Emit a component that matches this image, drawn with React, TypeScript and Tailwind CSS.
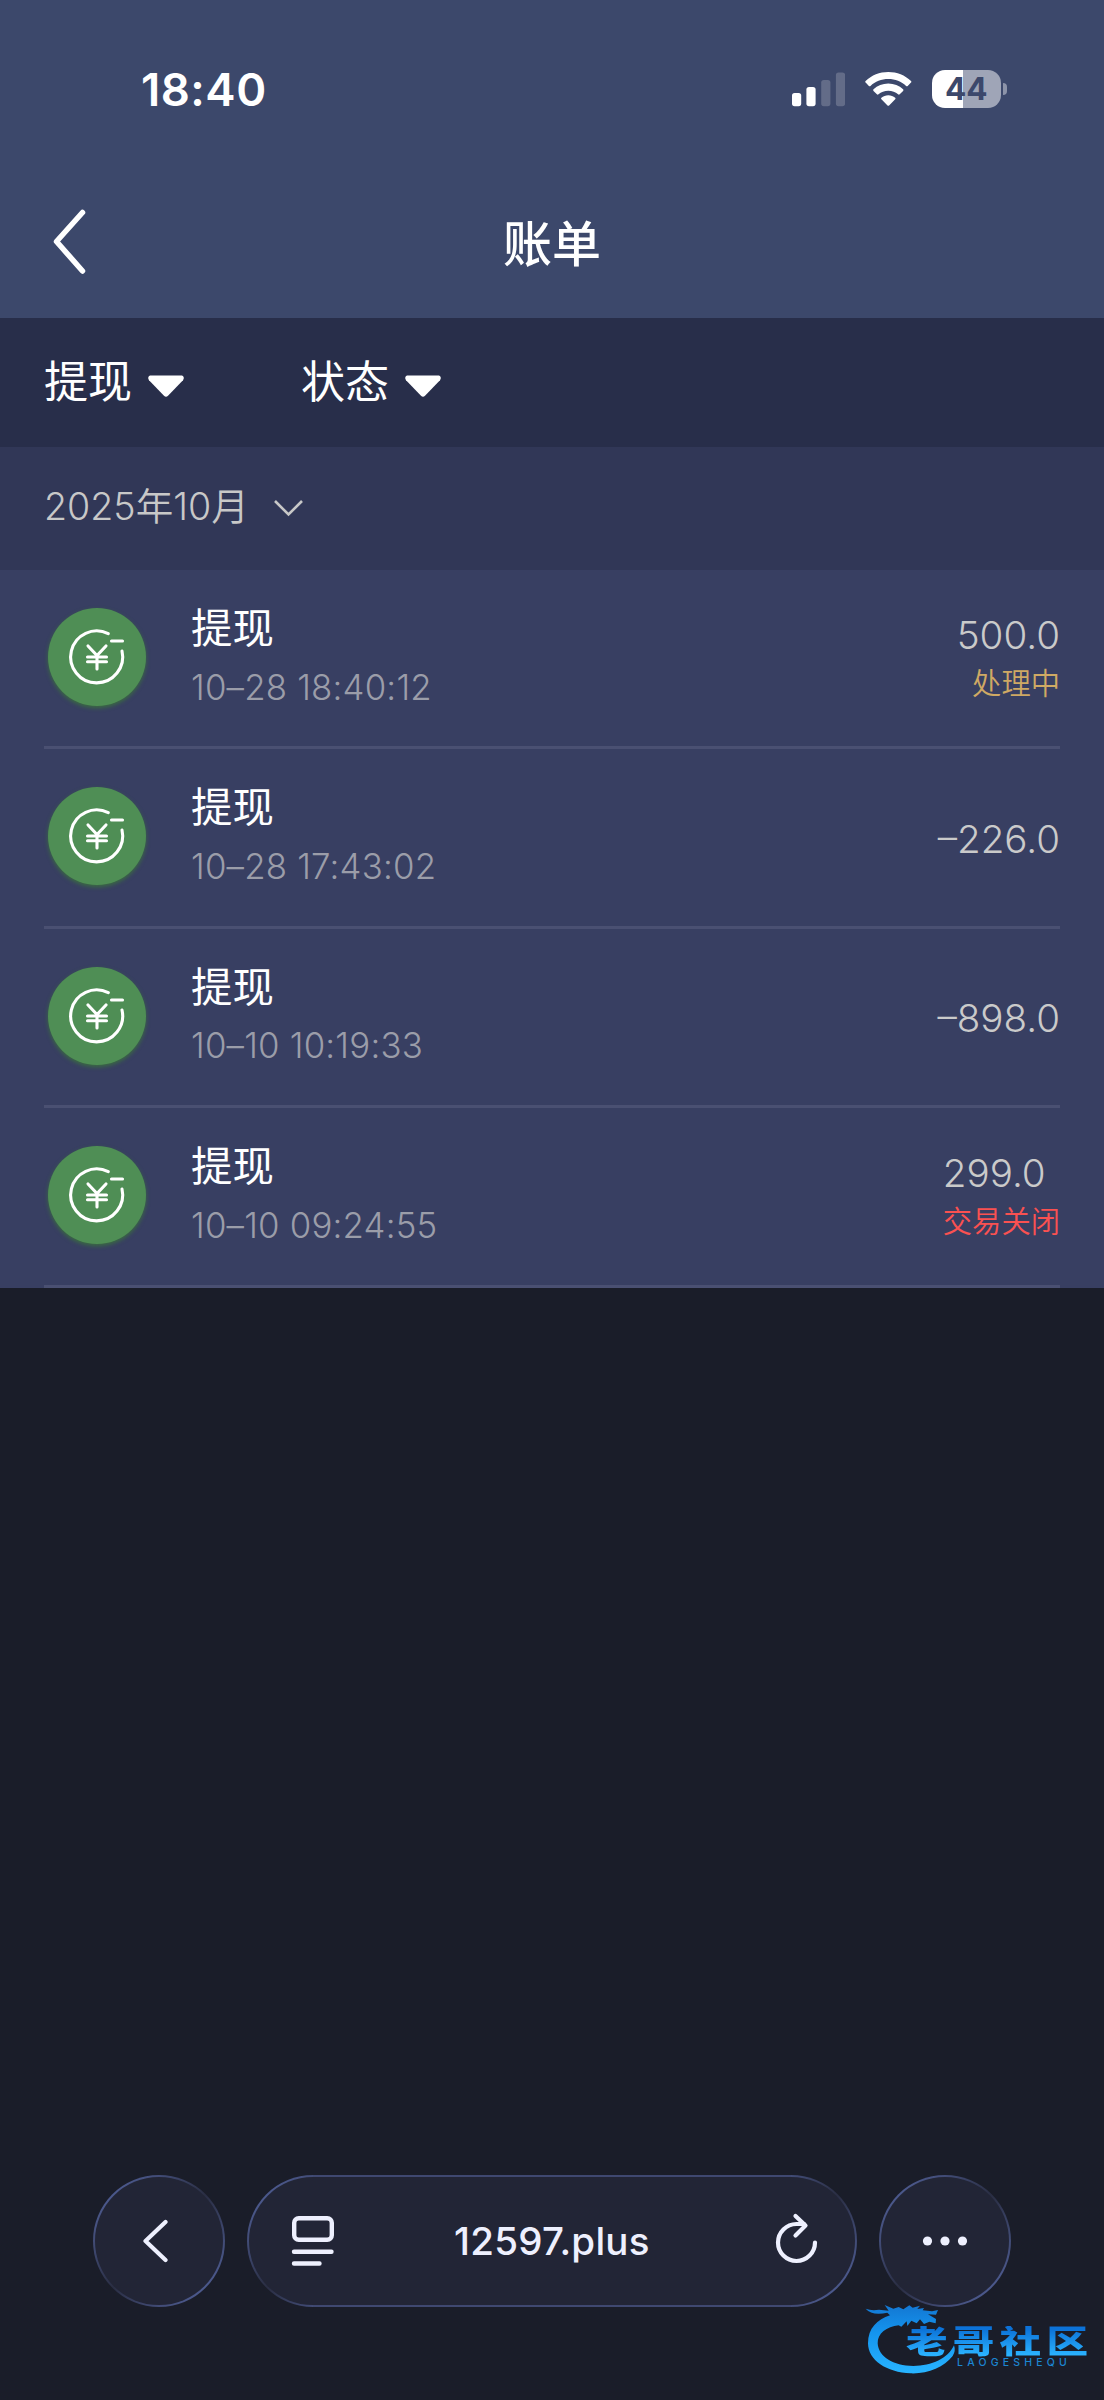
type Bill = {
  id: number
  title: string
  time: string
  amount: string
  status?: string
  closed?: boolean
}

const bills: Bill[] = [
  { id: 1, title: "提现", time: "10–28 18:40:12", amount: "500.0", status: "处理中" },
  { id: 2, title: "提现", time: "10–28 17:43:02", amount: "–226.0" },
  { id: 3, title: "提现", time: "10–10 10:19:33", amount: "–898.0" },
  { id: 4, title: "提现", time: "10–10 09:24:55", amount: "299.0", status: "交易关闭", closed: true },
]

function StatusBar() {
  return (
    <div className="flex h-[178px] items-start justify-between pl-[141px] pr-[97px] pt-[62px]">
      <span className="text-[45.5px] font-semibold leading-[55px] tracking-[0.5px]">18:40</span>
      <div className="flex pt-[8px]">
        <svg width="53" height="38" viewBox="0 0 53 38" fill="#fff">
          <rect x="0" y="23" width="9.2" height="13.2" rx="2.6" />
          <rect x="14.4" y="17" width="9.2" height="19.2" rx="2.6" />
          <rect x="29.2" y="10" width="9.2" height="26.2" rx="2.6" opacity=".2" />
          <rect x="43.9" y="2.4" width="9.2" height="33.8" rx="2.6" opacity=".2" />
        </svg>
        <svg className="ml-[20px]" width="47" height="38" viewBox="0 0 47 38" fill="#fff">
          <path d="M23.3 2.1C32 2.1 40 5.4 46 11q.8.8 0 1.6l-3.3 3.3q-.8.8-1.6 0C36.4 11.6 30.2 9 23.3 9S10.2 11.6 5.5 15.9q-.8.8-1.6 0L.6 12.6q-.8-.8 0-1.6C6.6 5.4 14.6 2.1 23.3 2.1z" />
          <path d="M23.3 13.6c5.7 0 10.9 2.1 14.8 5.7q.8.8 0 1.6l-3.4 3.4q-.8.8-1.6 0c-2.6-2.3-6-3.6-9.8-3.6s-7.2 1.3-9.8 3.6q-.8.8-1.6 0l-3.4-3.4q-.8-.8 0-1.6c3.9-3.6 9.1-5.7 14.8-5.7z" />
          <path d="M23.3 25.2c2.6 0 5 .9 6.9 2.5q.8.8 0 1.5l-6.1 6.3q-.8.7-1.6 0l-6.1-6.3q-.8-.7 0-1.5c1.9-1.6 4.3-2.5 6.9-2.5z" />
        </svg>
        <div className="ml-[20px] flex items-center">
          <div className="flex h-[38px] w-[68.5px] items-center justify-center rounded-[13px] bg-[linear-gradient(90deg,#fff_30.5px,#9fa5b7_30.5px)]">
            <span className="text-[31.5px] font-bold leading-[38px] text-[#3c486b]">44</span>
          </div>
          <div className="ml-[2.5px] h-[12px] w-[4px] rounded-r-[4px] bg-[#8d94a9]" />
        </div>
      </div>
    </div>
  )
}

function Filter({ label }: { label: string }) {
  return (
    <div className="flex w-[257px] items-center">
      <span className="text-[44px] leading-[64px]">{label}</span>
      <svg className="ml-[15px] mt-[8px]" width="38" height="24" viewBox="0 0 38 24">
        <path d="M3 1.5H35Q38 3 36 6.2L21 21.8Q19 23.5 17 21.8L2 6.2Q0 3 3 1.5Z" fill="#fff" />
      </svg>
    </div>
  )
}

function YuanIcon() {
  return (
    <div className="size-[98px] rounded-full bg-[#4f8e55] shadow-[0_2px_4px_rgba(60,130,50,0.7)]">
      <svg width="98" height="98" viewBox="0 0 98 98" fill="none" stroke="#fff" strokeWidth="3.1" strokeLinecap="round">
        <path d="M60.3 25.6A26 26 0 1 0 74 43" />
        <path d="M63.5 33H74.5" />
        <path d="M40 38L49 47.5L58 38M49 47.5V61M39.5 49H58.5M39.5 53.8H58.5" />
      </svg>
    </div>
  )
}

function BillRow({ bill }: { bill: Bill }) {
  return (
    <li className="mx-[44px] flex h-[179.4px] items-start border-b-[3px] border-[#4a5072]">
      <div className="ml-[4px] mt-[38px]">
        <YuanIcon />
      </div>
      <div className="ml-[45px] pt-[31px]">
        <div className="text-[41.4px] leading-[54px] text-white">{bill.title}</div>
        <div className="mt-[7.5px] text-[34.8px] font-[350] leading-[48px] tracking-[0.2px] text-[#9b9da9]">{bill.time}</div>
      </div>
      <div className="ml-auto flex h-full flex-col items-start justify-center pt-[2px]">
        <div className="text-[38.6px] font-[350] leading-[48px] text-[#cacaca]">{bill.amount}</div>
        {bill.status && (
          <div className={bill.closed ? "self-end pt-[1px] text-[29.3px] font-[350] leading-[48px] text-[#fa5151]" : "self-end pt-[1px] text-[29.3px] font-[350] leading-[48px] text-[#cfa964]"}>
            {bill.status}
          </div>
        )}
      </div>
    </li>
  )
}

function RoundButton({ children }: { children: React.ReactNode }) {
  return (
    <div className="size-[132px] rounded-full bg-[linear-gradient(135deg,#4b588b_15%,#2a2e43_50%,#4b588b_85%)] p-[2px]">
      <div className="flex size-full items-center justify-center rounded-full bg-[#222536]">{children}</div>
    </div>
  )
}

function BrowserBar() {
  return (
    <div className="mt-auto flex gap-[22px] pl-[93px] pb-[93px]">
      <RoundButton>
        <svg className="-ml-[8px]" width="26" height="44" viewBox="0 0 26 44" fill="none" stroke="#eef0fe" strokeWidth="4.2" strokeLinecap="round" strokeLinejoin="round">
          <path d="M23.5 3L3.5 22L23.5 41" />
        </svg>
      </RoundButton>

      {/* round caps get their own light, the straight part stays even */}
      <div className="h-[132px] w-[610px] rounded-[66px] bg-[linear-gradient(#3f4870,#3f4870),linear-gradient(135deg,#4b588b_15%,#2a2e43_50%,#4b588b_85%),linear-gradient(135deg,#4b588b_15%,#2a2e43_50%,#4b588b_85%)] bg-[length:478px_132px,132px_132px,132px_132px] bg-[position:66px_0,0_0,478px_0] bg-no-repeat p-[2px]">
        <div className="flex size-full items-center rounded-[64px] bg-[#222536]">
          <svg className="ml-[42px]" width="44" height="52" viewBox="0 0 44 52" fill="none" stroke="#eef0fe" strokeWidth="4.4" strokeLinecap="round">
            <rect x="3.2" y="3.2" width="37.6" height="21.6" rx="4.5" />
            <path d="M3 36.8H40.5M3 48.5H28.5" />
          </svg>
          <span className="ml-[119px] text-[38.5px] font-[450] leading-[48px] tracking-[0.25px] text-[#eef0fe]">12597.plus</span>
          <svg className="ml-auto mr-[37px] -mt-[4px]" width="44" height="52" viewBox="0 0 44 52" fill="none" stroke="#eef0fe" strokeWidth="4.2" strokeLinecap="round" strokeLinejoin="round">
            <path d="M41 29.5A18.5 18.5 0 1 1 22.5 11H30" />
            <path d="M21.5 3L31.5 12.5L21.5 22.5" />
          </svg>
        </div>
      </div>

      <RoundButton>
        <svg width="46" height="10" viewBox="0 0 46 10" fill="#eef0fe">
          <circle cx="5.5" cy="5" r="4.6" />
          <circle cx="23" cy="5" r="4.6" />
          <circle cx="40.5" cy="5" r="4.6" />
        </svg>
      </RoundButton>
    </div>
  )
}

function Watermark() {
  return (
    <div className="absolute left-[864px] top-[2300px] h-[80px] w-[228px]">
      <svg className="absolute left-0 top-0" width="100" height="80" viewBox="72 450 300 240">
        <defs>
          <linearGradient id="dragon" x1="0" y1="0" x2="0" y2="1">
            <stop offset="0" stopColor="#1377d2" />
            <stop offset=".4" stopColor="#1494ee" />
            <stop offset="1" stopColor="#28b4ff" />
          </linearGradient>
        </defs>
        <path
          fill="url(#dragon)"
          d="M77 476Q95 483 117 479L146 482L134 465L160 476L176 471L190 478L208 466L218 473L240 467L232 477L252 474L248 481L276 484L294 480L288 494L264 493L288 507L287 520L268 515L252 522L240 508L230 520L214 512L202 528L200 514L184 530L176 526C140 530 112 550 113 580C115 620 160 648 220 648C275 648 325 625 342 586Q348 602 338 618C312 652 262 672 212 670C140 668 84 630 84 580C84 535 112 508 150 496L142 488Q96 498 77 476Z"
        />
      </svg>
      <div className="absolute left-[42px] top-[26px] origin-left scale-x-[1.3] whitespace-nowrap bg-[linear-gradient(#0c72d8_10%,#2ab2ff_90%)] bg-clip-text text-[32px] font-black leading-[32px] tracking-[4px] text-transparent">
        老哥社区
      </div>
      <div className="absolute left-[93px] top-[58px] text-[10.5px] font-medium leading-[10px] tracking-[4.2px] text-[#1c86d2]">LAOGESHEQU</div>
    </div>
  )
}

export default function App() {
  return (
    <div className="relative flex h-[2400px] w-[1104px] flex-col overflow-hidden bg-[#1a1d29] font-[Inter,'Noto_Sans_CJK_SC',sans-serif] text-white">
      <header className="h-[317.5px] bg-[#3c486b]">
        <StatusBar />
        <div className="relative flex h-[133px] items-center justify-center">
          <svg className="absolute left-[51px] top-[30px]" width="36" height="68" viewBox="0 0 36 68" fill="none" stroke="#fff" strokeWidth="5.5" strokeLinecap="round" strokeLinejoin="round">
            <path d="M31.5 4.5L5.5 33.5L31.5 63" />
          </svg>
          <h1 className="text-[49px] font-medium leading-[64px]">账单</h1>
        </div>
      </header>

      <div className="flex h-[129.5px] items-center bg-[#282e4a] pl-[44px]">
        <Filter label="提现" />
        <Filter label="状态" />
      </div>

      <div className="flex h-[123px] items-center bg-[#313757] pb-[3px] pl-[44px] text-[#c8c8c8]">
        <span className="text-[37.6px] font-[350] leading-[48px]">2025年10月</span>
        <svg className="ml-[23px] mt-[2px]" width="32" height="20" viewBox="0 0 32 20" fill="none" stroke="#c8c8c8" strokeWidth="2.6">
          <path d="M3 3L16.5 16.5L30 3" />
        </svg>
      </div>

      <ul className="bg-[#383f62]">
        {bills.map((bill) => (
          <BillRow key={bill.id} bill={bill} />
        ))}
      </ul>

      <BrowserBar />
      <Watermark />
    </div>
  )
}
